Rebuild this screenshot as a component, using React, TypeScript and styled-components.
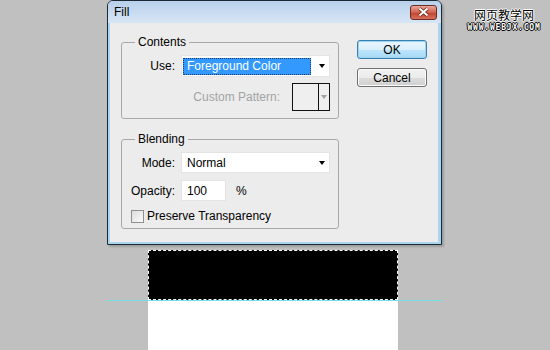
import React from "react";
import styled, { createGlobalStyle } from "styled-components";

const GlobalStyle = createGlobalStyle`
  html, body {
    margin: 0;
    padding: 0;
  }
  body {
    background: #c0c0c0;
    font-family: "Liberation Sans", Arial, sans-serif;
    font-size: 12px;
    color: #000;
  }
`;

const Page = styled.div`
  position: relative;
  width: 550px;
  height: 350px;
  overflow: hidden;
  box-sizing: border-box;
  padding-left: 107px;
  background: #c0c0c0;
  display: flex;
  flex-direction: column;
  gap: 5px;
`;

const Dialog = styled.div`
  width: 335px;
  height: 245px;
  flex: none;
  box-sizing: border-box;
  border: 1px solid #1b2836;
  border-radius: 6px 6px 0 0;
  background: #a9d5ee;
  display: flex;
  flex-direction: column;
  box-shadow: 2px 2px 2px rgba(0, 0, 0, 0.18);
`;

const TitleBar = styled.div`
  height: 22px;
  flex: none;
  display: flex;
  align-items: center;
  justify-content: space-between;
  padding: 0 4px 0 6px;
  border-radius: 5px 5px 0 0;
  background: linear-gradient(#b8d0eb, #d7e6f5);
`;

const Title = styled.span`
  font-size: 12px;
`;

const CloseButton = styled.div`
  width: 27px;
  height: 15px;
  box-sizing: border-box;
  border: 1px solid #6e2c24;
  border-radius: 3px;
  background: linear-gradient(#e9a89b, #d2614e 50%, #c0412c 51%, #d7715e);
  display: flex;
  align-items: center;
  justify-content: center;
`;

const Client = styled.div`
  flex: 1;
  margin: 0 3px 2px 2px;
  background: #ececec;
  display: flex;
  padding: 12px 0 0 11px;
  gap: 18px;
`;

const Groups = styled.div`
  width: 218px;
  display: flex;
  flex-direction: column;
  gap: 13px;
`;

const Group = styled.fieldset<{ $bottom: number }>`
  margin: 0;
  padding: 0 8px ${(p) => p.$bottom}px 0;
  border: 1px solid #a8a8a8;
  border-radius: 3px;
  min-width: 0;
`;

const Legend = styled.legend`
  margin-left: 13px;
  padding: 0 3px;
  line-height: 14px;
  font-size: 12px;
`;

const FieldRow = styled.div<{ $top: number }>`
  display: grid;
  grid-template-columns: 53px 149px;
  column-gap: 6px;
  align-items: center;
  margin-top: ${(p) => p.$top}px;
`;

const Label = styled.label`
  text-align: right;
  white-space: nowrap;
`;

const Select = styled.div<{ $h: number }>`
  height: ${(p) => p.$h}px;
  box-sizing: border-box;
  background: #fff;
  border: 1px solid #e4e4e4;
  display: flex;
  align-items: center;
  padding: 0 4px 0 1px;
`;

const SelectValue = styled.span<{ $active?: boolean }>`
  flex: ${(p) => (p.$active ? "none" : "1")};
  width: ${(p) => (p.$active ? "128px" : "auto")};
  height: ${(p) => (p.$active ? "17px" : "auto")};
  box-sizing: border-box;
  display: flex;
  align-items: center;
  padding-left: ${(p) => (p.$active ? "3px" : "4px")};
  background: ${(p) => (p.$active ? "#3399ff" : "transparent")};
  color: ${(p) => (p.$active ? "#fff" : "#000")};
  border: ${(p) => (p.$active ? "1px dotted #1a3a66" : "none")};
`;

const Spacer = styled.span`
  flex: 1;
`;

const Arrow = styled.span<{ $color?: string }>`
  width: 0;
  height: 0;
  border-left: 3.5px solid transparent;
  border-right: 3.5px solid transparent;
  border-top: 4px solid ${(p) => p.$color || "#000"};
`;

const PatternRow = styled.div`
  display: flex;
  align-items: center;
  justify-content: flex-end;
  gap: 12px;
  margin-top: 6px;
`;

const MutedLabel = styled.span`
  color: #a3a3a3;
`;

const PatternBox = styled.div`
  width: 38px;
  height: 28px;
  box-sizing: border-box;
  border: 1px solid #111;
  display: grid;
  grid-template-columns: 25px 1fr;
  background: #efefef;
`;

const PatternArrow = styled.div`
  border-left: 1px solid #111;
  display: flex;
  align-items: center;
  justify-content: center;
`;

const InputLine = styled.div`
  display: flex;
  align-items: center;
  gap: 10px;
`;

const NumberInput = styled.div`
  width: 45px;
  height: 21px;
  box-sizing: border-box;
  background: #fff;
  border: 1px solid #e4e4e4;
  display: flex;
  align-items: center;
  padding-left: 5px;
`;

const CheckRow = styled.div`
  display: flex;
  align-items: center;
  gap: 3px;
  height: 14px;
  margin-top: 8px;
  padding-left: 9px;
`;

const CheckBox = styled.span`
  width: 13px;
  height: 13px;
  box-sizing: border-box;
  border: 1px solid #8f8f8f;
  background: linear-gradient(135deg, #dcdcdc, #fbfbfb);
`;

const Buttons = styled.div`
  padding-top: 5px;
  display: flex;
  flex-direction: column;
  gap: 9px;
`;

const Button = styled.div<{ $primary?: boolean }>`
  width: 70px;
  height: 19px;
  box-sizing: border-box;
  border: 1px solid ${(p) => (p.$primary ? "#3c7fb1" : "#707070")};
  border-radius: 3px;
  background: ${(p) =>
    p.$primary
      ? "linear-gradient(#e8f5fc, #d9f0fc 50%, #bee6fd 51%, #a7d9f5)"
      : "linear-gradient(#f2f2f2, #ebebeb 50%, #dddddd 51%, #cfcfcf)"};
  box-shadow: inset 0 0 0 1px ${(p) => (p.$primary ? "#9ad4f0" : "#fcfcfc")};
  display: flex;
  align-items: center;
  justify-content: center;
  font-size: 12px;
`;

const Canvas = styled.div`
  position: relative;
  width: 336px;
`;

const Doc = styled.div`
  margin-left: 41px;
  width: 250px;
  height: 100px;
  display: flex;
  flex-direction: column;
  background: #fff;
`;

const Selection = styled.div`
  height: 50px;
  box-sizing: border-box;
  background: #000;
  border: 1px dashed #fff;
`;

const Guide = styled.div`
  position: absolute;
  left: 0;
  right: 0;
  top: 50px;
  height: 1px;
  background: #74e0e6;
`;

const Watermark = styled.div`
  position: absolute;
  left: 466px;
  top: 7px;
  width: 76px;
  display: flex;
  flex-direction: column;
  align-items: center;
  gap: 1px;
`;

const WatermarkCn = styled.span`
  font-family: "Noto Sans CJK SC", sans-serif;
  font-size: 12px;
  line-height: 15px;
  color: #000;
  text-shadow: 1px 0 #fff, -1px 0 #fff, 0 1px #fff, 0 -1px #fff;
`;

const WatermarkEn = styled.span`
  font-family: "DejaVu Sans Mono", monospace;
  font-weight: bold;
  font-size: 8px;
  line-height: 9px;
  letter-spacing: 0.8px;
  color: #fff;
  text-shadow: 1px 0 #000, -1px 0 #000, 0 1px #000, 0 -1px #000;
`;

const CloseIcon = () => (
  <svg width="13" height="10" viewBox="0 0 13 10">
    <path d="M2.5 1.5 L10.5 8.5 M10.5 1.5 L2.5 8.5" stroke="#5a1d14" strokeWidth="3.4" />
    <path d="M2.5 1.5 L10.5 8.5 M10.5 1.5 L2.5 8.5" stroke="#fff" strokeWidth="2" />
  </svg>
);

const App: React.FC = () => {
  return (
    <Page>
      <GlobalStyle />
      <Dialog>
        <TitleBar>
          <Title>Fill</Title>
          <CloseButton>
            <CloseIcon />
          </CloseButton>
        </TitleBar>
        <Client>
          <Groups>
            <Group $bottom={7}>
              <Legend>Contents</Legend>
              <FieldRow $top={6}>
                <Label>Use:</Label>
                <Select $h={22}>
                  <SelectValue $active>Foreground Color</SelectValue>
                  <Spacer />
                  <Arrow />
                </Select>
              </FieldRow>
              <PatternRow>
                <MutedLabel>Custom Pattern:</MutedLabel>
                <PatternBox>
                  <span />
                  <PatternArrow>
                    <Arrow $color="#a0a0a0" />
                  </PatternArrow>
                </PatternBox>
              </PatternRow>
            </Group>
            <Group $bottom={5}>
              <Legend>Blending</Legend>
              <FieldRow $top={6}>
                <Label>Mode:</Label>
                <Select $h={21}>
                  <SelectValue>Normal</SelectValue>
                  <Arrow />
                </Select>
              </FieldRow>
              <FieldRow $top={7}>
                <Label>Opacity:</Label>
                <InputLine>
                  <NumberInput>100</NumberInput>
                  <span>%</span>
                </InputLine>
              </FieldRow>
              <CheckRow>
                <CheckBox />
                <span>Preserve Transparency</span>
              </CheckRow>
            </Group>
          </Groups>
          <Buttons>
            <Button $primary>OK</Button>
            <Button>Cancel</Button>
          </Buttons>
        </Client>
      </Dialog>
      <Canvas>
        <Doc>
          <Selection />
        </Doc>
        <Guide />
      </Canvas>
      <Watermark>
        <WatermarkCn>网页教学网</WatermarkCn>
        <WatermarkEn>WWW.WEBJX.COM</WatermarkEn>
      </Watermark>
    </Page>
  );
};

export default App;
